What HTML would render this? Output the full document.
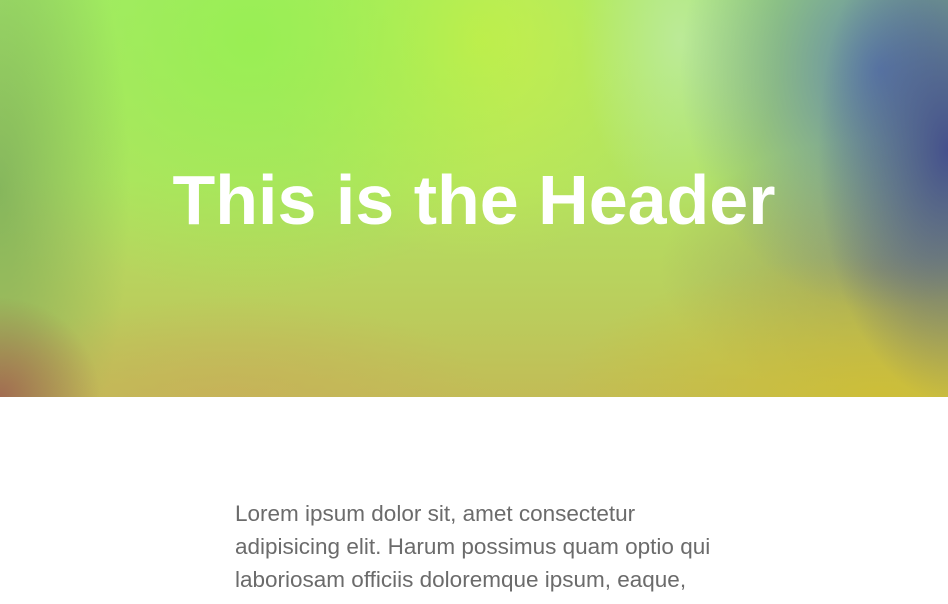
<!DOCTYPE html>
<html><head><style>
html,body{margin:0;padding:0;width:948px;height:604px;overflow:hidden;background:#fff;font-family:"Liberation Sans",Arial,sans-serif}
.hdr{position:absolute;left:0;top:0;width:948px;height:397px;
background:
radial-gradient(ellipse 130px 250px at 948px 150px, rgba(65,75,140,.95), rgba(65,75,140,0) 100%),
radial-gradient(ellipse 200px 240px at 880px 70px, rgba(90,125,180,.9), rgba(90,125,180,0) 100%),
radial-gradient(ellipse 100px 170px at 680px 40px, rgba(190,235,160,.85), rgba(190,235,160,0) 100%),
radial-gradient(ellipse 320px 140px at 880px 395px, rgba(205,190,55,.95), rgba(205,190,55,0) 100%),
radial-gradient(ellipse 220px 130px at 880px 270px, rgba(140,135,100,.6), rgba(140,135,100,0) 100%),
radial-gradient(ellipse 100px 100px at 0px 397px, rgba(160,100,80,.9), rgba(160,100,80,0) 100%),
radial-gradient(ellipse 260px 100px at 230px 397px, rgba(200,175,90,.7), rgba(200,175,90,0) 100%),
radial-gradient(ellipse 130px 350px at 0px 190px, rgba(110,160,90,.65), rgba(110,160,90,0) 100%),
radial-gradient(ellipse 280px 260px at 250px 40px, rgba(150,240,80,.85), rgba(150,240,80,0) 100%),
radial-gradient(ellipse 220px 220px at 480px 40px, rgba(200,240,70,.85), rgba(200,240,70,0) 100%),
linear-gradient(180deg,#a8e86a 0%,#b2e262 45%,#bbcc5c 80%,#c2bc56 100%);}
h1{position:absolute;left:0;width:948px;top:160px;margin:0;text-align:center;color:#fff;font-size:70px;font-weight:bold;line-height:80px}
p{position:absolute;left:235px;top:497px;margin:0;color:#6b6b6b;font-size:22.5px;line-height:33px;white-space:nowrap}
</style></head><body>
<div class="hdr"></div>
<h1>This is the Header</h1>
<p>Lorem ipsum dolor sit, amet consectetur<br>adipisicing elit. Harum possimus quam optio qui<br>laboriosam officiis doloremque ipsum, eaque,</p>
</body></html>
